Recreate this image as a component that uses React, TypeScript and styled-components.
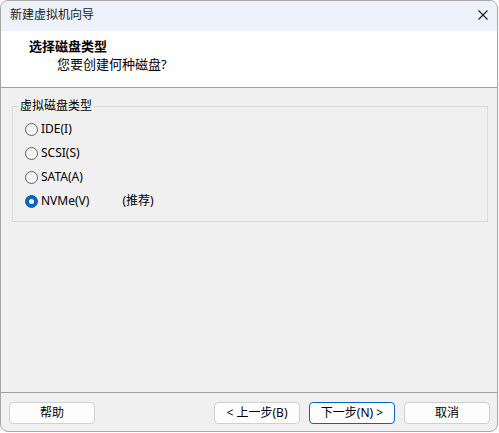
import React from "react";
import styled, { createGlobalStyle } from "styled-components";

const FONT = `"Noto Sans", "Noto Sans CJK SC", sans-serif`;

const GlobalStyle = createGlobalStyle`
  html, body { margin: 0; padding: 0; background: #ffffff; }
  body {
    font-family: ${FONT};
    font-size: 12px;
    color: #000;
  }
`;

const Window = styled.div`
  width: 498px;
  height: 432px;
  box-sizing: border-box;
  border: 1px solid #a6a6a6;
  border-radius: 8px;
  overflow: hidden;
  display: flex;
  flex-direction: column;
  background: #f0f0f0;
`;

const TitleBar = styled.div`
  height: 30px;
  flex: none;
  display: flex;
  align-items: center;
  justify-content: space-between;
  padding: 0 9px 2px 9px;
  box-sizing: border-box;
  background: #eef2fa;
`;

const TitleText = styled.span`
  font-size: 12px;
  line-height: 14px;
  color: #1a1a1a;
`;

const CloseButton = styled.div`
  width: 10px;
  height: 10px;
  display: flex;
`;

const Header = styled.div`
  height: 57px;
  flex: none;
  background: #ffffff;
  border-bottom: 1px solid #a0a0a0;
  padding: 7px 0 0 28px;
  box-sizing: border-box;
  display: flex;
  flex-direction: column;
  gap: 2px;
`;

const HeaderTitle = styled.div`
  font-size: 13px;
  line-height: 16px;
  font-weight: 700;
`;

const HeaderSub = styled.div`
  font-size: 13px;
  line-height: 16px;
  padding-left: 28px;
`;

const Body = styled.div`
  flex: 1;
  padding: 18px 9px 0 11px;
`;

const GroupBox = styled.div`
  position: relative;
  border: 1px solid #dcdcdc;
  padding: 10px 12px 8px 12px;
  display: flex;
  flex-direction: column;
`;

const GroupLabel = styled.span`
  position: absolute;
  top: -8px;
  left: 6px;
  padding: 0 1px;
  background: #f0f0f0;
  font-size: 12px;
  line-height: 14px;
`;

const RadioRow = styled.label`
  height: 24px;
  display: flex;
  align-items: center;
  font-size: 12px;
  line-height: 14px;
`;

const RadioCircle = styled.span<{ $checked?: boolean }>`
  width: 13px;
  height: 13px;
  box-sizing: border-box;
  border-radius: 50%;
  border: 1px solid ${(p) => (p.$checked ? "#0067c0" : "#5f5f5f")};
  background: ${(p) => (p.$checked ? "#0067c0" : "#f7f7f7")};
  display: flex;
  align-items: center;
  justify-content: center;
  margin-right: 3px;
  flex: none;
  &::after {
    content: "";
    display: ${(p) => (p.$checked ? "block" : "none")};
    width: 5px;
    height: 5px;
    border-radius: 50%;
    background: #ffffff;
  }
`;

const Hint = styled.span`
  margin-left: 33px;
`;

const Footer = styled.div`
  flex: none;
  height: 39px;
  box-sizing: border-box;
  border-top: 1px solid #a0a0a0;
  padding: 9px 7px 0 8px;
  display: flex;
  align-items: flex-start;
`;

const Spacer = styled.div`
  flex: 1;
`;

const ButtonGroup = styled.div`
  display: flex;
  gap: 9px;
`;

const Button = styled.button<{ $focused?: boolean }>`
  width: 86px;
  height: 22px;
  box-sizing: border-box;
  border: 1px solid ${(p) => (p.$focused ? "#0067c0" : "#d0d0d0")};
  border-radius: 4px;
  background: #fdfdfd;
  font-family: ${FONT};
  font-size: 12px;
  line-height: 14px;
  color: #000;
  padding: 0;
  display: flex;
  align-items: center;
  justify-content: center;
`;

const options = [
  { label: "IDE(I)", checked: false },
  { label: "SCSI(S)", checked: false },
  { label: "SATA(A)", checked: false },
  { label: "NVMe(V)", checked: true, hint: "(推荐)" },
];

export default function App() {
  return (
    <>
      <GlobalStyle />
      <Window>
        <TitleBar>
          <TitleText>新建虚拟机向导</TitleText>
          <CloseButton>
            <svg width="10" height="10" viewBox="0 0 10 10">
              <path d="M0.5 0.5 L9.5 9.5 M9.5 0.5 L0.5 9.5" stroke="#1a1a1a" strokeWidth="1.1" fill="none" />
            </svg>
          </CloseButton>
        </TitleBar>
        <Header>
          <HeaderTitle>选择磁盘类型</HeaderTitle>
          <HeaderSub>您要创建何种磁盘?</HeaderSub>
        </Header>
        <Body>
          <GroupBox>
            <GroupLabel>虚拟磁盘类型</GroupLabel>
            {options.map((o) => (
              <RadioRow key={o.label}>
                <RadioCircle $checked={o.checked} />
                <span>{o.label}</span>
                {o.hint && <Hint>{o.hint}</Hint>}
              </RadioRow>
            ))}
          </GroupBox>
        </Body>
        <Footer>
          <Button>帮助</Button>
          <Spacer />
          <ButtonGroup>
            <Button>&lt; 上一步(B)</Button>
            <Button $focused>下一步(N) &gt;</Button>
            <Button>取消</Button>
          </ButtonGroup>
        </Footer>
      </Window>
    </>
  );
}
